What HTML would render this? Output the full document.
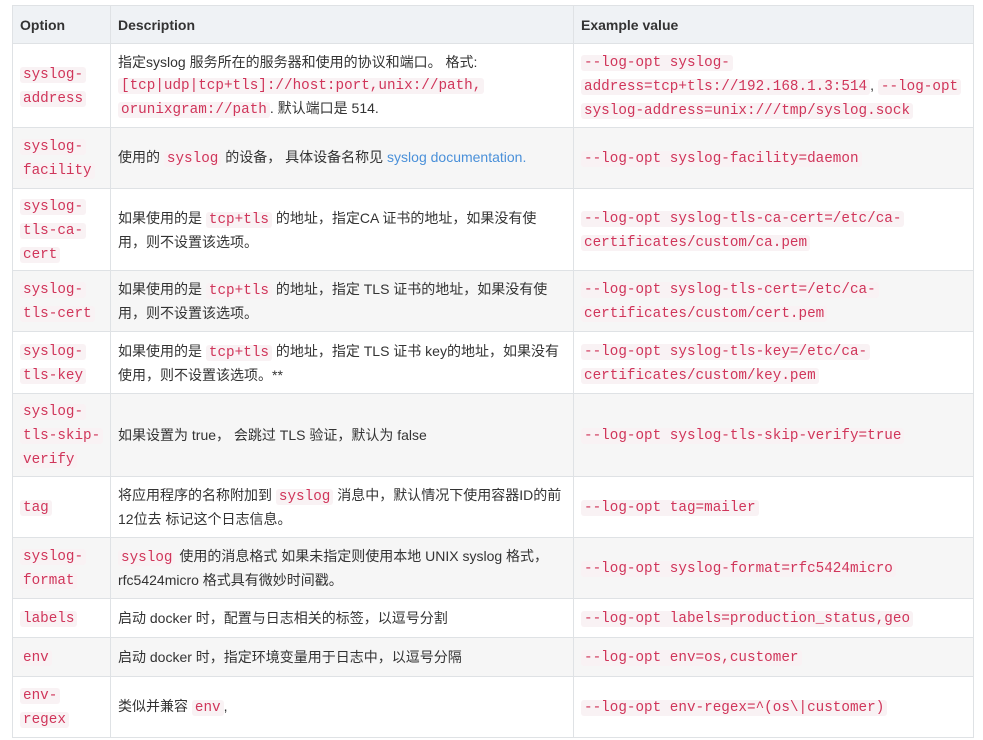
<!DOCTYPE html>
<html><head><meta charset="utf-8"><style>
body{margin:0;background:#fff;font-family:"Liberation Sans","Noto Sans CJK SC",sans-serif;font-size:14px;color:#333;}
table{position:absolute;left:12px;top:5px;border-collapse:collapse;table-layout:fixed;width:961px;}
td,th{border:1px solid #dfe2e5;padding:0 7px;vertical-align:middle;line-height:22px;text-align:left;}
th{background:#eff2f5;height:37px;font-weight:bold;font-size:14px;color:#333;}
tr:nth-child(odd) td{background:#f6f6f6;}
code{font-family:"Liberation Mono",monospace;font-size:14.3px;color:#d0355a;background:#f9f2f4;padding:0 3px;border-radius:3px;white-space:nowrap;}
a{color:#4a90d9;text-decoration:none;}
</style></head><body>
<table>
<colgroup><col style="width:98px"><col style="width:463px"><col style="width:400px"></colgroup>
<tr><th>Option</th><th>Description</th><th>Example value</th></tr>
<tr style="height:84px"><td><code>syslog-</code><br><code>address</code></td><td>指定syslog 服务所在的服务器和使用的协议和端口。 格式:<br><code>[tcp|udp|tcp+tls]://host:port,unix://path,</code><br><code>orunixgram://path</code>. 默认端口是 514.</td><td><code>--log-opt syslog-</code><br><code>address=tcp+tls://192.168.1.3:514</code>, <code>--log-opt</code><br><code>syslog-address=unix:///tmp/syslog.sock</code></td></tr>
<tr style="height:61px"><td><code>syslog-</code><br><code>facility</code></td><td>使用的 <code>syslog</code> 的设备， 具体设备名称见 <a>syslog documentation.</a></td><td><code>--log-opt syslog-facility=daemon</code></td></tr>
<tr style="height:82px"><td><code>syslog-</code><br><code>tls-ca-</code><br><code>cert</code></td><td>如果使用的是 <code>tcp+tls</code> 的地址，指定CA 证书的地址，如果没有使<br>用，则不设置该选项。</td><td><code>--log-opt syslog-tls-ca-cert=/etc/ca-</code><br><code>certificates/custom/ca.pem</code></td></tr>
<tr style="height:61px"><td><code>syslog-</code><br><code>tls-cert</code></td><td>如果使用的是 <code>tcp+tls</code> 的地址，指定 TLS 证书的地址，如果没有使<br>用，则不设置该选项。</td><td><code>--log-opt syslog-tls-cert=/etc/ca-</code><br><code>certificates/custom/cert.pem</code></td></tr>
<tr style="height:62px"><td><code>syslog-</code><br><code>tls-key</code></td><td>如果使用的是 <code>tcp+tls</code> 的地址，指定 TLS 证书 key的地址，如果没有<br>使用，则不设置该选项。**</td><td><code>--log-opt syslog-tls-key=/etc/ca-</code><br><code>certificates/custom/key.pem</code></td></tr>
<tr style="height:83px"><td><code>syslog-</code><br><code>tls-skip-</code><br><code>verify</code></td><td>如果设置为 true， 会跳过 TLS 验证，默认为 false</td><td><code>--log-opt syslog-tls-skip-verify=true</code></td></tr>
<tr style="height:61px"><td><code>tag</code></td><td>将应用程序的名称附加到 <code>syslog</code> 消息中，默认情况下使用容器ID的前<br>12位去 标记这个日志信息。</td><td><code>--log-opt tag=mailer</code></td></tr>
<tr style="height:61px"><td><code>syslog-</code><br><code>format</code></td><td><code>syslog</code> 使用的消息格式 如果未指定则使用本地 UNIX syslog 格式，<br>rfc5424micro 格式具有微妙时间戳。</td><td><code>--log-opt syslog-format=rfc5424micro</code></td></tr>
<tr style="height:39px"><td><code>labels</code></td><td>启动 docker 时，配置与日志相关的标签，以逗号分割</td><td><code>--log-opt labels=production_status,geo</code></td></tr>
<tr style="height:39px"><td><code>env</code></td><td>启动 docker 时，指定环境变量用于日志中，以逗号分隔</td><td><code>--log-opt env=os,customer</code></td></tr>
<tr style="height:61px"><td><code>env-</code><br><code>regex</code></td><td>类似并兼容 <code>env</code>,</td><td><code>--log-opt env-regex=^(os\|customer)</code></td></tr>
</table>
</body></html>
